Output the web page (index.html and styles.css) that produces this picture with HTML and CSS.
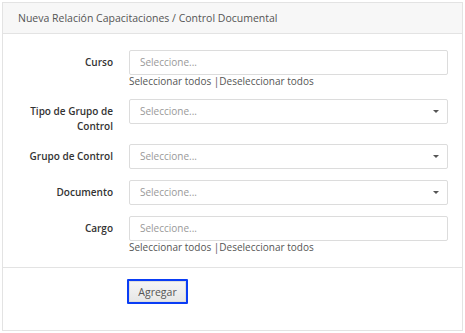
FILE: index.html
```html
<!DOCTYPE html>
<html lang="es">
<head>
<meta charset="utf-8">
<link rel="stylesheet" href="styles.css">
</head>
<body>
<div class="panel">
  <div class="panel-heading">Nueva Relación Capacitaciones / Control Documental</div>
  <div class="panel-body">
    <div class="row">
      <label class="lbl">Curso</label>
      <div class="field">
        <div class="input">Seleccione...</div>
        <div class="links">Seleccionar todos |Deseleccionar todos</div>
      </div>
    </div>
    <div class="row">
      <label class="lbl">Tipo de Grupo de Control</label>
      <div class="field">
        <div class="input select">Seleccione...<span class="caret"></span></div>
      </div>
    </div>
    <div class="row">
      <label class="lbl">Grupo de Control</label>
      <div class="field">
        <div class="input select">Seleccione...<span class="caret"></span></div>
      </div>
    </div>
    <div class="row">
      <label class="lbl">Documento</label>
      <div class="field">
        <div class="input select">Seleccione...<span class="caret"></span></div>
      </div>
    </div>
    <div class="row last">
      <label class="lbl">Cargo</label>
      <div class="field">
        <div class="input">Seleccione...</div>
        <div class="links">Seleccionar todos |Deseleccionar todos</div>
      </div>
    </div>
  </div>
  <div class="panel-footer">
    <button class="btn">Agregar</button>
  </div>
</div>
</body>
</html>
```
FILE: styles.css
```css
html, body {
  margin: 0;
  padding: 0;
  background: #fff;
  font-family: "Open Sans", "Liberation Sans", sans-serif;
  font-size: 10px;
  color: #555;
}
.panel {
  margin: 2px;
  border: 1px solid #e3e3e3;
  background: #fff;
}
.panel-heading {
  background: #f7f7f7;
  border-bottom: 1px solid #e3e3e3;
  height: 30px;
  line-height: 30px;
  padding-left: 15px;
  font-size: 10.5px;
  color: #555;
}
.panel-body {
  padding: 16px 14px 13px 0;
  border-bottom: 1px solid #e3e3e3;
}
.row {
  display: grid;
  grid-template-columns: 110px 1fr;
  column-gap: 16px;
  margin-bottom: 11px;
}
.row.last {
  margin-bottom: 0;
}
.lbl {
  text-align: right;
  font-weight: 600;
  color: #333;
  line-height: 15px;
  padding-top: 5px;
  margin-bottom: -1px;
}
.input {
  position: relative;
  height: 23px;
  line-height: 23px;
  border: 1px solid #dcdcdc;
  border-radius: 2px;
  padding-left: 10px;
  color: #999;
}
.caret {
  position: absolute;
  right: 8px;
  top: 10px;
  width: 0;
  height: 0;
  border-left: 3px solid transparent;
  border-right: 3px solid transparent;
  border-top: 3px solid #555;
}
.links {
  line-height: 13px;
  color: #555;
}
.panel-footer {
  padding: 11px 0 26px 124px;
}
.btn {
  display: block;
  width: 61px;
  height: 25px;
  margin: 0;
  padding: 0;
  font-family: "Open Sans", "Liberation Sans", sans-serif;
  font-size: 10.5px;
  color: #555;
  background: linear-gradient(#f6f6f6, #e6e6e6);
  border: 2px solid #0a3df5;
  border-radius: 1px;
  box-shadow: inset 0 0 0 1px #ddd;
}
```
